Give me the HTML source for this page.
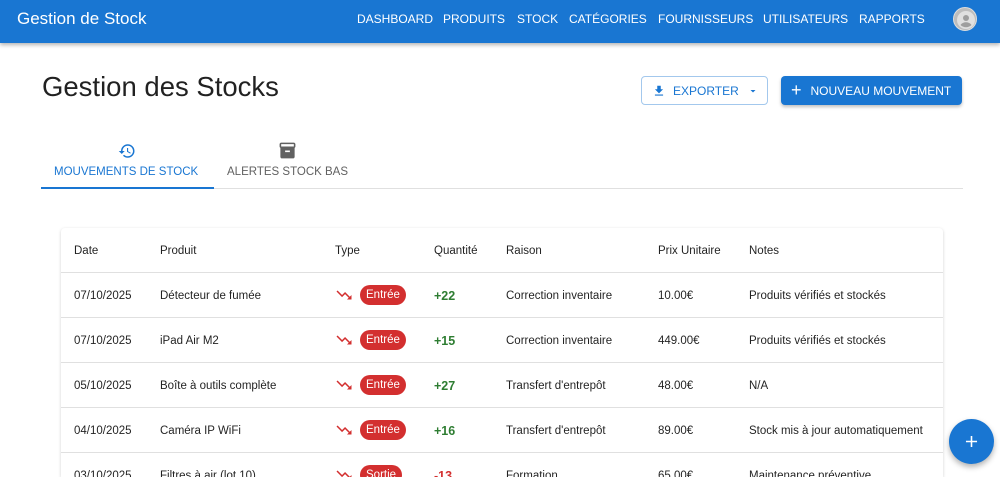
<!DOCTYPE html>
<html><head><meta charset="utf-8"><style>
*{box-sizing:border-box;margin:0;padding:0}
html,body{width:1000px;height:477px;overflow:hidden}
body{background:#fff;font-family:"Liberation Sans",sans-serif;color:rgba(0,0,0,.87);position:relative}
.nav{position:absolute;left:0;top:0;width:1000px;height:43px;background:#1976d2;box-shadow:0 2px 4px rgba(0,0,0,.3);color:#fff}
.brand{position:absolute;left:17px;top:9px;font-size:17px}
.links{position:absolute;top:12px;font-size:12px}
.links span{position:absolute;white-space:nowrap}
.av{position:absolute;left:953px;top:7px;width:24px;height:24px;border-radius:50%;background:#bdbdbd;border:1px solid #ddd;overflow:hidden}
h1{position:absolute;left:42px;top:71px;font-size:27.5px;font-weight:400}
.btn{position:absolute;height:29px;border-radius:4px;font-size:12px;display:flex;align-items:center;white-space:nowrap}
.b1{left:641px;top:76px;width:127px;border:1px solid rgba(25,118,210,.4);color:#1976d2}
.b2{left:781px;top:76px;width:181px;background:#1976d2;color:#fff;box-shadow:0 2px 3px rgba(0,0,0,.25)}
.tab{position:absolute;font-size:11.5px;white-space:nowrap}
.wrap{position:absolute;left:0;top:0;width:1000px;height:477px;overflow:hidden}
.tbl{position:absolute;left:61px;top:228px;width:882px;height:249px;box-shadow:0 1px 3px rgba(0,0,0,.18);border-radius:4px 4px 0 0;overflow:hidden}
.row{position:absolute;left:0;width:882px;height:45px;border-bottom:1px solid #e0e0e0;font-size:11.5px}
.row span{position:absolute;top:17px;white-space:nowrap}
.chip{background:#d32f2f;color:#fff;border-radius:10px;height:20px;line-height:20px;padding:0 6px;top:12px!important;font-size:11.5px}
.q{font-weight:700;font-size:12.5px;top:16px!important}
.fab{position:absolute;left:949px;top:419px;width:45px;height:45px;border-radius:50%;background:#1976d2;box-shadow:0 3px 6px rgba(0,0,0,.3)}
</style></head><body><div class="wrap">
<div class="nav"><div class="brand">Gestion de Stock</div>
<div class="links"><span style="left:357px">DASHBOARD</span><span style="left:443px">PRODUITS</span><span style="left:517px">STOCK</span><span style="left:569px">CATÉGORIES</span><span style="left:658px">FOURNISSEURS</span><span style="left:763px">UTILISATEURS</span><span style="left:859px">RAPPORTS</span></div>
<div class="av"><svg width="24" height="24" viewBox="0 0 24 24"><circle cx="12" cy="12" r="9" fill="#e0e0e0"/><circle cx="12" cy="10" r="3" fill="#9e9e9e"/><path d="M6.5 17c1.5-2 3.5-2.7 5.5-2.7s4 .7 5.5 2.7c-1.5 1.5-3.4 2.2-5.5 2.2s-4-.7-5.5-2.2z" fill="#9e9e9e"/></svg></div>
</div>
<h1>Gestion des Stocks</h1>
<div class="btn b1"><svg style="margin-left:10px" width="14" height="14" viewBox="0 0 24 24"><path fill="#1976d2" d="M19 9h-4V3H9v6H5l7 7 7-7zM5 18v2h14v-2H5z"/></svg><span style="margin-left:7px">EXPORTER</span><svg style="margin-left:8px" width="12" height="12" viewBox="0 0 24 24"><path fill="#1976d2" d="M7 10l5 5 5-5z"/></svg></div>
<div class="btn b2"><span style="margin-left:10px;font-size:18px;font-weight:300">+</span><span style="margin-left:9px">NOUVEAU MOUVEMENT</span></div>
<svg style="position:absolute;left:118px;top:142px" width="18" height="18" viewBox="0 0 24 24"><path fill="#1976d2" d="M13 3a9 9 0 0 0-9 9H1l3.89 3.89.07.14L9 12H6c0-3.87 3.13-7 7-7s7 3.13 7 7-3.13 7-7 7c-1.93 0-3.68-.79-4.94-2.06l-1.42 1.42A8.954 8.954 0 0 0 13 21a9 9 0 0 0 0-18zm-1 5v5l4.28 2.54.72-1.21-3.5-2.08V8H12z"/></svg>
<svg style="position:absolute;left:278px;top:141px" width="19" height="19" viewBox="0 0 24 24"><path fill="#616161" d="M20 2H4c-1 0-2 .9-2 2v3.01c0 .72.43 1.34 1 1.69V20c0 1.1 1.1 2 2 2h14c.9 0 2-.9 2-2V8.7c.57-.35 1-.97 1-1.69V4c0-1.1-1-2-2-2zm-5 12H9v-2h6v2zm5-7H4V4h16v3z"/></svg>
<div class="tab" style="left:54px;top:166px;color:#1976d2">MOUVEMENTS DE STOCK</div>
<div class="tab" style="left:227px;top:166px;color:#616161">ALERTES STOCK BAS</div>
<div style="position:absolute;left:41px;top:188px;width:922px;height:1px;background:#e0e0e0"></div>
<div style="position:absolute;left:41px;top:187px;width:173px;height:2px;background:#1976d2"></div>
<div class="tbl">
<div class="row" style="top:0"><span style="left:13px">Date</span><span style="left:99px">Produit</span><span style="left:274px">Type</span><span style="left:373px">Quantité</span><span style="left:445px">Raison</span><span style="left:597px">Prix Unitaire</span><span style="left:688px">Notes</span></div>
<div class="row" style="top:45px"><span style="left:13px">07/10/2025</span><span style="left:99px">Détecteur de fumée</span><span style="left:274px;top:13px"><svg width="18" height="18" viewBox="0 0 24 24"><path fill="#d32f2f" d="M16 18l2.29-2.29-4.88-4.88-4 4L2 7.41 3.41 6l6 6 4-4 6.3 6.29L22 12v6z"/></svg></span><span class="chip" style="left:299px">Entrée</span><span class="q" style="left:373px;color:#2e7d32">+22</span><span style="left:445px">Correction inventaire</span><span style="left:597px">10.00€</span><span style="left:688px">Produits vérifiés et stockés</span></div>
<div class="row" style="top:90px"><span style="left:13px">07/10/2025</span><span style="left:99px">iPad Air M2</span><span style="left:274px;top:13px"><svg width="18" height="18" viewBox="0 0 24 24"><path fill="#d32f2f" d="M16 18l2.29-2.29-4.88-4.88-4 4L2 7.41 3.41 6l6 6 4-4 6.3 6.29L22 12v6z"/></svg></span><span class="chip" style="left:299px">Entrée</span><span class="q" style="left:373px;color:#2e7d32">+15</span><span style="left:445px">Correction inventaire</span><span style="left:597px">449.00€</span><span style="left:688px">Produits vérifiés et stockés</span></div>
<div class="row" style="top:135px"><span style="left:13px">05/10/2025</span><span style="left:99px">Boîte à outils complète</span><span style="left:274px;top:13px"><svg width="18" height="18" viewBox="0 0 24 24"><path fill="#d32f2f" d="M16 18l2.29-2.29-4.88-4.88-4 4L2 7.41 3.41 6l6 6 4-4 6.3 6.29L22 12v6z"/></svg></span><span class="chip" style="left:299px">Entrée</span><span class="q" style="left:373px;color:#2e7d32">+27</span><span style="left:445px">Transfert d'entrepôt</span><span style="left:597px">48.00€</span><span style="left:688px">N/A</span></div>
<div class="row" style="top:180px"><span style="left:13px">04/10/2025</span><span style="left:99px">Caméra IP WiFi</span><span style="left:274px;top:13px"><svg width="18" height="18" viewBox="0 0 24 24"><path fill="#d32f2f" d="M16 18l2.29-2.29-4.88-4.88-4 4L2 7.41 3.41 6l6 6 4-4 6.3 6.29L22 12v6z"/></svg></span><span class="chip" style="left:299px">Entrée</span><span class="q" style="left:373px;color:#2e7d32">+16</span><span style="left:445px">Transfert d'entrepôt</span><span style="left:597px">89.00€</span><span style="left:688px">Stock mis à jour automatiquement</span></div>
<div class="row" style="top:225px"><span style="left:13px">03/10/2025</span><span style="left:99px">Filtres à air (lot 10)</span><span style="left:274px;top:13px"><svg width="18" height="18" viewBox="0 0 24 24"><path fill="#d32f2f" d="M16 18l2.29-2.29-4.88-4.88-4 4L2 7.41 3.41 6l6 6 4-4 6.3 6.29L22 12v6z"/></svg></span><span class="chip" style="left:299px">Sortie</span><span class="q" style="left:373px;color:#d32f2f">-13</span><span style="left:445px">Formation</span><span style="left:597px">65.00€</span><span style="left:688px">Maintenance préventive</span></div>
</div>
<div class="fab"><svg style="position:absolute;left:13px;top:13px" width="19" height="19" viewBox="0 0 24 24"><path fill="#fff" d="M19 13h-6v6h-2v-6H5v-2h6V5h2v6h6v2z"/></svg></div>
</div></body></html>
